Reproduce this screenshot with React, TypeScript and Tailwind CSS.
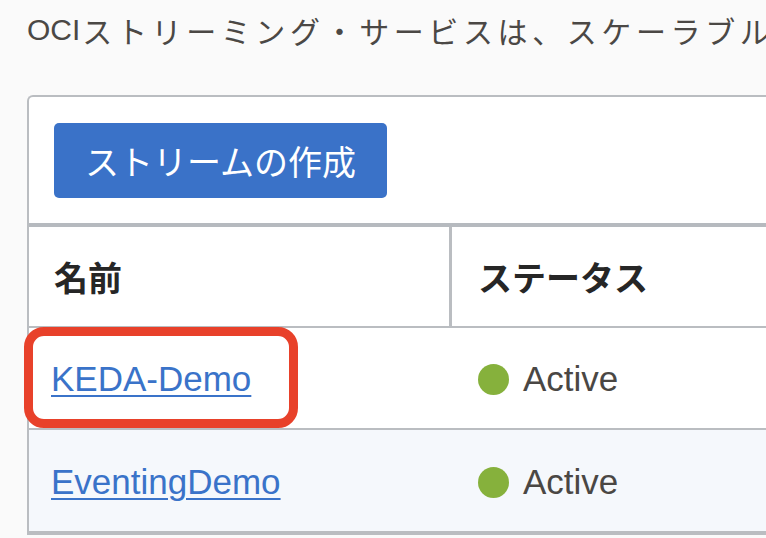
export default function App() {
  const rows = [
    { name: "KEDA-Demo", status: "Active" },
    { name: "EventingDemo", status: "Active" },
  ];

  return (
    <div className="relative h-[538px] w-[766px] overflow-hidden bg-[#fafafa] font-['Liberation_Sans','Noto_Sans_CJK_JP',sans-serif]">
      {/* Intro text */}
      <p className="flex h-[53px] items-center overflow-hidden whitespace-nowrap pl-[27px] pt-[7px] text-[30px] leading-[46px] text-[#4b4845]">
        <span className="mr-[2px]">OCI</span>
        <span className="tracking-[4.6px] font-['Noto_Sans_CJK_JP',sans-serif]">
          ストリーミング・サービスは、スケーラブル
        </span>
      </p>

      {/* Streams card */}
      <div className="ml-[27px] mt-[42px] w-[800px] rounded-tl-md border-2 border-r-0 border-[#babdc1] bg-white">
        <div className="px-[25px] pb-[25px] pt-[26px]">
          <button className="flex h-[75px] w-[333px] items-center justify-center rounded-[5px] bg-[#3a72c8] text-[34px] text-white font-['Noto_Sans_CJK_JP',sans-serif]">
            ストリームの作成
          </button>
        </div>

        <div className="h-[4px] bg-[#b6babf]" />

        {/* Header */}
        <div className="flex h-[101px] border-b-2 border-[#babdc1] font-['Noto_Sans_CJK_JP',sans-serif] text-[34px] font-bold text-[#262626]">
          <div className="flex w-[423px] items-center border-r-[3px] border-[#babdc1] pl-[25px]">
            名前
          </div>
          <div className="flex items-center pl-[26px]">ステータス</div>
        </div>

        {/* Rows */}
        {rows.map((row, idx) => (
          <div
            key={row.name}
            className={
              idx % 2 === 1
                ? "flex h-[103px] border-b-2 border-[#babdc1] bg-[#f5f8fc] pt-[3px]"
                : "flex h-[102px] border-b-2 border-[#babdc1] bg-white pt-[3px]"
            }
          >
            <div className="flex w-[423px] items-center pl-[22px]">
              <a
                href="#"
                className="text-[35px] text-[#3a73c9] underline decoration-2 underline-offset-[4px]"
              >
                {row.name}
              </a>
            </div>
            <div className="flex items-center gap-[14px] pl-[26px]">
              <span className="h-[31px] w-[31px] rounded-full bg-[#86b13c]" />
              <span className="text-[35px] text-[#4a4744]">{row.status}</span>
            </div>
          </div>
        ))}
      </div>

      {/* Highlight annotation */}
      <div className="absolute left-[24px] top-[327px] h-[101px] w-[274px] rounded-[20px] border-[9px] border-[#e8412a]" />
    </div>
  );
}
